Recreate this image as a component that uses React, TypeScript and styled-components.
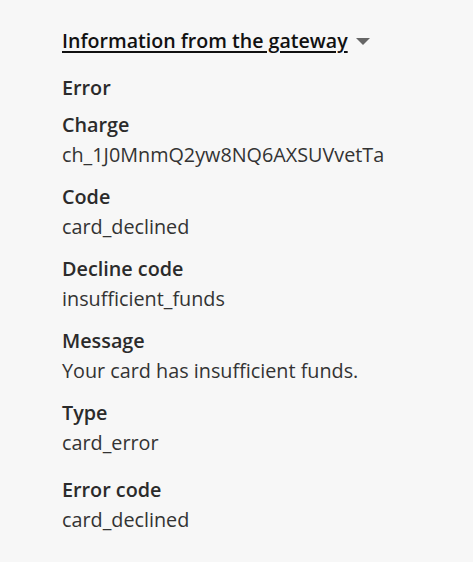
import styled, { createGlobalStyle } from "styled-components";

const GlobalStyle = createGlobalStyle`
    body {
        margin: 0;
        background: #f7f7f7;
        font-family: "Open Sans", "Noto Sans", sans-serif;
        color: #2b2b2b;
    }
`

const Panel = styled.div`
    padding: 26px 0 24px 62px;
    font-size: 19.8px;
    line-height: 30px;
`

const Toggle = styled.div`
    display: flex;
    align-items: center;
    gap: 8px;
    margin-bottom: 17px;
`

const ToggleText = styled.span`
    font-size: 19.6px;
    font-weight: 600;
    color: #111;
    text-decoration: underline;
    text-underline-offset: 3px;
    text-decoration-thickness: 2px;
`

const Caret = styled.span`
    width: 0;
    height: 0;
    border-left: 7px solid transparent;
    border-right: 7px solid transparent;
    border-top: 7px solid #666;
`

const Heading = styled.div`
    font-weight: 600;
    margin-bottom: 7px;
`

const Field = styled.div<{ $gap?: number }>`
    margin-bottom: ${props => props.$gap ?? 12}px;
`

const Label = styled.div`
    font-weight: 600;
`

const Value = styled.div`
    color: #333;
`

const fields = [
    { label: "Charge", value: "ch_1J0MnmQ2yw8NQ6AXSUVvetTa" },
    { label: "Code", value: "card_declined" },
    { label: "Decline code", value: "insufficient_funds" },
    { label: "Message", value: "Your card has insufficient funds." },
    { label: "Type", value: "card_error", gap: 17 },
    { label: "Error code", value: "card_declined" },
]

const App = () => {
    return (
        <>
            <GlobalStyle />
            <Panel>
                <Toggle>
                    <ToggleText>Information from the gateway</ToggleText>
                    <Caret />
                </Toggle>
                <Heading>Error</Heading>
                {fields.map(f => (
                    <Field key={f.label} $gap={f.gap}>
                        <Label>{f.label}</Label>
                        <Value>{f.value}</Value>
                    </Field>
                ))}
            </Panel>
        </>
    )
}

export default App;
